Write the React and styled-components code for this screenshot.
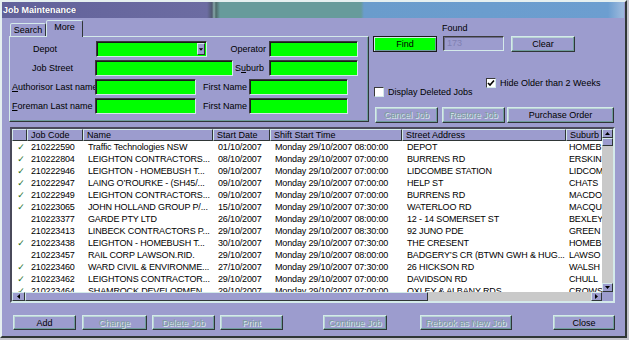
import React from 'react';
import styled, { createGlobalStyle } from 'styled-components';

const C = {
  face: '#9c9cce',
  light: '#d4eaea',
  mid: '#6f9c9c',
  dark: '#2f3636',
  green: '#00ff00',
  track: '#c9c9c9',
};

const GlobalStyle = createGlobalStyle`
  html, body { margin: 0; padding: 0; background: #c4c4cc; }
  body { font-family: "Liberation Sans", Arial, sans-serif; font-size: 9px; color: #000; }
  * { box-sizing: border-box; }
`;

const Window = styled.div`
  width: 627px;
  height: 338px;
  background: ${C.face};
  border: 2px solid;
  border-color: #e6f0f0 ${C.dark} ${C.dark} #e6f0f0;
  display: flex;
  flex-direction: column;
  overflow: hidden;
`;

const TitleBar = styled.div`
  flex: none;
  height: 16px;
  margin-right: 1px;
  padding-left: 1px;
  color: #fff;
  font-weight: bold;
  font-size: 9px;
  line-height: 16px;
  background: linear-gradient(to right, #62629a 0px, #6c6ca2 205px, #505a70 210px, #8aa 212px, #4e6a6a 214px, #679b9b 218px, #679b9b 359px, #6a9ccc 362px, #6c9ed0 606px, #9ab8dc 620px);
  text-shadow: 1px 0 0 rgba(0,0,0,0.25);
`;

const Body = styled.div`
  display: flex;
  flex-direction: column;
  padding: 2px 0 0 7px;
`;

const TopSection = styled.div`
  display: flex;
  align-items: flex-start;
`;

const TabArea = styled.div`
  width: 360px;
  display: flex;
  flex-direction: column;
`;

const TabStrip = styled.div`
  display: flex;
  align-items: flex-end;
  height: 16px;
  padding-left: 1px;
  position: relative;
  z-index: 1;
`;

const Tab = styled.div`
  width: ${p => p.$w}px;
  height: ${p => (p.$active ? 17 : 13)}px;
  margin-bottom: ${p => (p.$active ? -1 : 0)}px;
  background: ${C.face};
  border: 1px solid;
  border-bottom: none;
  border-color: ${C.light} ${C.dark} transparent ${C.light};
  border-radius: 2px 2px 0 0;
  text-align: center;
  line-height: ${p => (p.$active ? 13 : 12)}px;
`;

const TabPanel = styled.div`
  width: 360px;
  height: 86px;
  border: 1px solid;
  border-color: ${C.light} ${C.dark} ${C.dark} ${C.light};
  box-shadow: inset -1px -1px 0 ${C.mid};
  padding: 4px 0 0 1px;
  display: flex;
  flex-direction: column;
  gap: 3px;
`;

const FieldRow = styled.div`
  display: flex;
  align-items: center;
  height: 16px;
`;

const Label = styled.div`
  flex: none;
  width: ${p => p.$w}px;
  padding-left: ${p => p.$pl || 0}px;
  padding-right: ${p => p.$pr || 0}px;
  text-align: ${p => p.$align || 'left'};
  white-space: nowrap;
`;

const GreenInput = styled.div`
  flex: none;
  width: ${p => p.$w}px;
  height: 16px;
  background: ${C.green};
  border: 1px solid;
  border-color: #3a3a3a ${C.light} ${C.light} #3a3a3a;
  box-shadow: inset 1px 1px 0 #1a1a1a;
  position: relative;
`;

const DropButton = styled.div`
  position: absolute;
  right: 1px;
  top: 1px;
  width: 8px;
  height: 12px;
  background: ${C.face};
  border: 1px solid;
  border-color: ${C.light} ${C.dark} ${C.dark} ${C.light};
  display: flex;
  align-items: center;
  justify-content: center;
`;

const RightPanel = styled.div`
  width: 247px;
  margin-left: 4px;
  display: flex;
  flex-direction: column;
`;

const FoundLabel = styled.div`
  margin-top: 2px;
  height: 12px;
  line-height: 12px;
  padding-left: 69px;
`;

const TopRow = styled.div`
  display: flex;
  align-items: flex-start;
  margin-top: 2px;
  height: 16px;
`;

const Btn = styled.button`
  flex: none;
  width: ${p => p.$w}px;
  height: ${p => p.$h || 16}px;
  margin-left: ${p => p.$ml || 0}px;
  padding: 0;
  background: ${p => (p.$green ? C.green : C.face)};
  border: 1px solid;
  border-color: ${p => (p.$green ? '#1a1a1a' : `${C.light} ${C.dark} ${C.dark} ${C.light}`)};
  box-shadow: ${p => (p.$green ? `inset 1px 1px 0 ${C.light}, inset -1px -1px 0 ${C.mid}` : `inset -1px -1px 0 ${C.mid}, inset 1px 1px 0 #b8d4d4`)};
  font-family: "Liberation Sans", Arial, sans-serif;
  font-size: 9px;
  color: ${p => (p.disabled ? '#7c9c9c' : '#000')};
  text-shadow: ${p => (p.disabled ? '1px 1px 0 #dcecec' : 'none')};
  line-height: 12px;
  cursor: default;
`;

const FoundBox = styled.div`
  flex: none;
  width: 61px;
  height: 15px;
  margin-left: 6px;
  background: ${C.face};
  border: 1px solid;
  border-color: #3a3a3a ${C.light} ${C.light} #3a3a3a;
  box-shadow: inset 1px 1px 0 #6a6a8a;
  color: #8080b2;
  padding-left: 3px;
  line-height: 13px;
`;

const CheckRow = styled.label`
  display: flex;
  align-items: center;
  height: 10px;
  margin-top: ${p => p.$mt}px;
  padding-left: ${p => p.$pl}px;
  white-space: nowrap;
`;

const CheckBox = styled.span`
  flex: none;
  width: 10px;
  height: 10px;
  background: #fff;
  border: 1px solid;
  border-color: #3a3a3a ${C.light} ${C.light} #3a3a3a;
  display: flex;
  align-items: center;
  justify-content: center;
  margin-right: 4px;
`;

const ButtonRow = styled.div`
  display: flex;
  margin-top: 10px;
  padding-left: 2px;
`;

const GridBox = styled.div`
  width: 605px;
  height: 176px;
  margin: 4px 0 0 1px;
  border: 2px solid;
  border-color: #4a4a5a ${C.light} ${C.light} #4a4a5a;
  display: grid;
  grid-template-columns: 590px 11px;
  grid-template-rows: 163px 9px;
  background: #fff;
`;

const cols = '15px 56px 130px 57px 132px 164px 36px';

const List = styled.div`
  overflow: hidden;
`;

const HeaderRow = styled.div`
  display: grid;
  grid-template-columns: ${cols};
  height: 12px;
`;

const HeaderCell = styled.div`
  background: ${C.face};
  border: 1px solid;
  border-color: ${C.light} ${C.dark} ${C.dark} ${C.light};
  padding-left: 3px;
  line-height: 10px;
  white-space: nowrap;
  overflow: hidden;
`;

const Row = styled.div`
  display: grid;
  grid-template-columns: ${cols};
  height: 12px;
  line-height: 12px;
`;

const Cell = styled.div`
  padding-left: ${p => p.$pl ?? 5}px;
  white-space: nowrap;
  overflow: hidden;
  letter-spacing: -0.15px;
`;

const Tick = styled.div`
  color: #1e6e1e;
  font-family: "DejaVu Sans", sans-serif;
  font-size: 9px;
  font-style: italic;
  text-align: center;
  padding-left: 3px;
`;

const VScroll = styled.div`
  display: flex;
  flex-direction: column;
  background: ${C.track};
`;

const HScroll = styled.div`
  display: flex;
  background: ${C.track};
`;

const ArrowBtn = styled.div`
  flex: none;
  width: ${p => p.$w || 11}px;
  height: ${p => p.$h || 9}px;
  background: ${C.face};
  border: 1px solid;
  border-color: ${C.light} ${C.dark} ${C.dark} ${C.light};
  display: flex;
  align-items: center;
  justify-content: center;
`;

const Thumb = styled.div`
  flex: none;
  width: ${p => p.$w}px;
  height: ${p => p.$h}px;
  background: ${C.face};
  border: 1px solid;
  border-color: ${C.light} ${C.dark} ${C.dark} ${C.light};
`;

const Track = styled.div`
  flex: 1;
`;

const Corner = styled.div`
  background: ${C.face};
`;

const BottomBar = styled.div`
  display: flex;
  margin-top: 12px;
  padding-left: 4px;
`;

const Tri = ({ dir }) => {
  const pts = {
    down: '1,2 6,2 3.5,5',
    up: '1,5 6,5 3.5,2',
    left: '5,1 5,6 2,3.5',
    right: '2,1 2,6 5,3.5',
  }[dir];
  return (
    <svg width="7" height="7" viewBox="0 0 7 7">
      <polygon points={pts} fill="#000" />
    </svg>
  );
};

const CheckMark = () => (
  <svg width="8" height="8" viewBox="0 0 8 8">
    <polyline points="1,4 3,6 7,1.5" fill="none" stroke="#000" strokeWidth="1.6" />
  </svg>
);

const rows = [
  [true, '210222590', 'Traffic Technologies NSW', '01/10/2007', '08:00:00', 'DEPOT', 'HOMEB'],
  [true, '210222804', 'LEIGHTON CONTRACTORS...', '08/10/2007', '07:00:00', 'BURRENS RD', 'ERSKIN'],
  [true, '210222946', 'LEIGHTON - HOMEBUSH T...', '09/10/2007', '07:00:00', 'LIDCOMBE STATION', 'LIDCOM'],
  [true, '210222947', 'LAING O\u2019ROURKE - (SH45/...', '09/10/2007', '07:00:00', 'HELP ST', 'CHATS'],
  [true, '210222949', 'LEIGHTON CONTRACTORS...', '09/10/2007', '07:00:00', 'BURRENS RD', 'MACDO'],
  [true, '210223065', 'JOHN HOLLAND GROUP P/...', '15/10/2007', '07:30:00', 'WATERLOO RD', 'MACQU'],
  [false, '210223377', 'GARDE PTY LTD', '26/10/2007', '08:00:00', '12 - 14 SOMERSET ST', 'BEXLEY'],
  [false, '210223413', 'LINBECK CONTRACTORS P...', '29/10/2007', '08:30:00', '92 JUNO PDE', 'GREEN'],
  [true, '210223438', 'LEIGHTON - HOMEBUSH T...', '30/10/2007', '07:30:00', 'THE CRESENT', 'HOMEB'],
  [false, '210223457', 'RAIL CORP LAWSON.RID.', '29/10/2007', '08:00:00', 'BADGERY\u2019S CR (BTWN GWH & HUG...', 'LAWSO'],
  [true, '210223460', 'WARD CIVIL & ENVIRONME...', '27/10/2007', '07:30:00', '26  HICKSON RD', 'WALSH'],
  [true, '210223462', 'LEIGHTONS CONTRACTOR...', '29/10/2007', '07:00:00', 'DAVIDSON RD', 'CHULL'],
  [true, '210223464', 'SHAMROCK DEVELOPMEN...', '29/10/2007', '07:00:00', 'OXLEY & ALBANY RDS', 'CROWS'],
];

export default function App() {
  return (
    <>
      <GlobalStyle />
      <Window>
        <TitleBar>Job Maintenance</TitleBar>
        <Body>
          <TopSection>
            <TabArea>
              <TabStrip>
                <Tab $w={36}>Search</Tab>
                <Tab $w={37} $active>More</Tab>
              </TabStrip>
              <TabPanel>
                <FieldRow>
                  <Label $w={85} $pl={22}>Depot</Label>
                  <GreenInput $w={111}>
                    <DropButton><Tri dir="down" /></DropButton>
                  </GreenInput>
                  <Label $w={62} $align="right" $pr={3}>Operator</Label>
                  <GreenInput $w={89} />
                </FieldRow>
                <FieldRow>
                  <Label $w={84} $pl={21}>Job Street</Label>
                  <GreenInput $w={138} />
                  <Label $w={36} $pl={2}>S<u>u</u>burb</Label>
                  <GreenInput $w={89} />
                </FieldRow>
                <FieldRow>
                  <Label $w={84} $pl={1}><u>A</u>uthorisor Last name</Label>
                  <GreenInput $w={101} />
                  <Label $w={53} $pl={7}>First Name</Label>
                  <GreenInput $w={99} />
                </FieldRow>
                <FieldRow>
                  <Label $w={84} $pl={1}><u>F</u>oreman Last name</Label>
                  <GreenInput $w={101} />
                  <Label $w={53} $pl={7}>First Name</Label>
                  <GreenInput $w={99} />
                </FieldRow>
              </TabPanel>
            </TabArea>
            <RightPanel>
              <FoundLabel>Found</FoundLabel>
              <TopRow>
                <Btn $w={64} $green>Find</Btn>
                <FoundBox>173</FoundBox>
                <Btn $w={64} $ml={7}>Clear</Btn>
              </TopRow>
              <CheckRow $mt={26} $pl={113}>
                <CheckBox><CheckMark /></CheckBox>
                Hide Older than 2 Weeks
              </CheckRow>
              <CheckRow $mt={-1} $pl={1}>
                <CheckBox />
                Display Deleted Jobs
              </CheckRow>
              <ButtonRow>
                <Btn $w={63} disabled>Cancel Job</Btn>
                <Btn $w={63} $ml={4} disabled>Restore Job</Btn>
                <Btn $w={107} $ml={2}>Purchase Order</Btn>
              </ButtonRow>
            </RightPanel>
          </TopSection>

          <GridBox>
            <List>
              <HeaderRow>
                <HeaderCell />
                <HeaderCell>Job Code</HeaderCell>
                <HeaderCell>Name</HeaderCell>
                <HeaderCell>Start Date</HeaderCell>
                <HeaderCell>Shift Start Time</HeaderCell>
                <HeaderCell>Street Address</HeaderCell>
                <HeaderCell>Suburb</HeaderCell>
              </HeaderRow>
              {rows.map(r => (
                <Row key={r[1]}>
                  <Tick>{r[0] ? '\u2713' : ''}</Tick>
                  <Cell $pl={4}>{r[1]}</Cell>
                  <Cell>{r[2]}</Cell>
                  <Cell>{r[3]}</Cell>
                  <Cell>Monday 29/10/2007 {r[4]}</Cell>
                  <Cell $pl={5}>{r[5]}</Cell>
                  <Cell $pl={3}>{r[6]}</Cell>
                </Row>
              ))}
            </List>
            <VScroll>
              <ArrowBtn $h={9}><Tri dir="up" /></ArrowBtn>
              <Thumb $w={11} $h={8} />
              <Track />
              <ArrowBtn $h={9}><Tri dir="down" /></ArrowBtn>
            </VScroll>
            <HScroll>
              <ArrowBtn $w={13}><Tri dir="left" /></ArrowBtn>
              <Thumb $w={403} $h={9} />
              <Track />
              <ArrowBtn $w={11}><Tri dir="right" /></ArrowBtn>
            </HScroll>
            <Corner />
          </GridBox>

          <BottomBar>
            <Btn $w={63} $h={15}>Add</Btn>
            <Btn $w={65} $h={15} $ml={6} disabled>Change</Btn>
            <Btn $w={63} $h={15} $ml={5} disabled>Delete Job</Btn>
            <Btn $w={63} $h={15} $ml={5} disabled>Print</Btn>
            <Btn $w={64} $h={15} $ml={40} disabled>Continue Job</Btn>
            <Btn $w={92} $h={15} $ml={33} disabled>Rebook as New Job</Btn>
            <Btn $w={62} $h={15} $ml={41}>Close</Btn>
          </BottomBar>
        </Body>
      </Window>
    </>
  );
}
